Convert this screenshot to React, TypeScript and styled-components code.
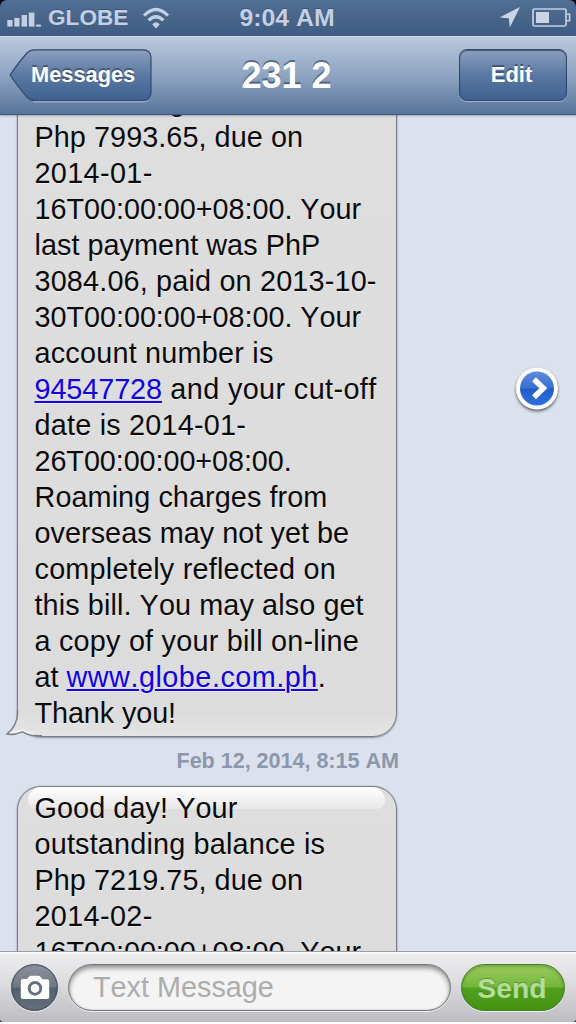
import React from 'react';
import styled, { createGlobalStyle } from 'styled-components';

const GlobalStyle = createGlobalStyle`
  * { box-sizing: border-box; }
  body {
    margin: 0;
    background: #fff;
    font-family: "Liberation Sans", Arial, sans-serif;
    font-kerning: none;
  }
`;

const Phone = styled.div`
  width: 576px;
  height: 1024px;
  display: flex;
  flex-direction: column;
  overflow: hidden;
  background: #fff;
`;

const Frame = styled.div`
  background: #060b14;
`;

const Screen = styled.div`
  height: 1022px;
  display: flex;
  flex-direction: column;
  overflow: hidden;
  border-radius: 7px 7px 3px 3px;
`;

const StatusBar = styled.div`
  flex: 0 0 36px;
  display: grid;
  grid-template-columns: 1fr auto 1fr;
  align-items: center;
  padding: 0 5px 0 7px;
  background: linear-gradient(#526f96, #486488 50%, #3f5c84);
  color: #c3d0e3;
  font-weight: bold;
  text-shadow: 0 -1px 0 rgba(20, 40, 70, 0.35);
`;

const StatusGroup = styled.div<{ $end?: boolean }>`
  display: flex;
  align-items: center;
  justify-content: ${(p) => (p.$end ? 'flex-end' : 'flex-start')};
`;

const Carrier = styled.span`
  font-size: 22.6px;
  line-height: 36px;
  margin: 0 14px 0 6px;
`;

const Clock = styled.span`
  font-size: 24.8px;
  line-height: 36px;
  padding-right: 4px;
`;

const NavBar = styled.div`
  position: relative;
  z-index: 1;
  flex: 0 0 79px;
  display: grid;
  grid-template-columns: 1fr auto 1fr;
  align-items: center;
  padding: 0 9px;
  background: linear-gradient(#b9c8dc, #8ea4c2 50%, #587499);
  border-top: 1px solid #d3deeb;
  border-bottom: 1px solid #3d5779;
  box-shadow: 0 1px 2px rgba(60, 80, 110, 0.4);
  color: #fff;
  font-weight: bold;
  text-shadow: 0 -2px 0 rgba(40, 60, 90, 0.6);
`;

const BackButton = styled.div`
  position: relative;
  width: 143px;
  height: 54px;
  padding-left: 22px;
  font-size: 21.8px;
  line-height: 52px;
`;

const BackShape = styled.svg`
  position: absolute;
  left: 0;
  top: 0;
`;

const Label = styled.span`
  position: relative;
`;

const Title = styled.div`
  font-size: 36px;
  line-height: 76px;
  padding-right: 3px;
`;

const EditButton = styled.div`
  justify-self: end;
  width: 108px;
  height: 52px;
  margin-bottom: 2px;
  border: 1px solid #2f486d;
  border-radius: 8px;
  background: linear-gradient(#8c9fbd, #5a78a3 50%, #40618f);
  box-shadow: inset 0 1px 1px rgba(20, 35, 65, 0.55), 0 1px 0 rgba(180, 200, 225, 0.7);
  text-align: center;
  font-size: 22px;
  line-height: 50px;
  padding-right: 3px;
`;

const Thread = styled.div`
  flex: 1 1 0;
  min-height: 0;
  overflow: hidden;
  background: #dbe2ee;
`;

const Transcript = styled.div`
  margin-top: -72px;
  padding-left: 17px;
  display: flex;
  flex-direction: column;
`;

const MessageRow = styled.div`
  display: flex;
  align-items: center;
  justify-content: space-between;
  padding-right: 16px;
`;

const Bubble = styled.div`
  position: relative;
  width: 380px;
  padding: 3px 0 5px 16.5px;
  border: 1px solid #7b7e83;
  border-radius: 24px;
  background: linear-gradient(#dedede, #dcdcdc calc(100% - 24px), #e4e4e4);
  box-shadow: 0 0 1px rgba(80, 85, 95, 0.6), 0 1px 2px rgba(70, 80, 100, 0.5);
`;

const Gloss = styled.div`
  position: absolute;
  left: 10px;
  right: 11px;
  top: 0;
  height: 22px;
  border-radius: 14px 14px 9px 9px;
  background: linear-gradient(#fff, rgba(255, 255, 255, 0.3));
`;

const Tail = styled.svg`
  position: absolute;
  left: -14px;
  bottom: -4px;
`;

const Line = styled.div<{ $tracking: number }>`
  position: relative;
  height: 36px;
  font-size: 28.8px;
  line-height: 36px;
  letter-spacing: ${(p) => p.$tracking}px;
  color: #0a0a0a;
  white-space: pre;
  text-shadow: 0 1px 0 rgba(255, 255, 255, 0.5);
`;

const Link = styled.span<{ $tracking?: number }>`
  color: #1100e0;
  letter-spacing: ${(p) => p.$tracking ?? 0}px;
  text-decoration: underline;
  text-decoration-thickness: 2px;
  text-underline-offset: 2px;
`;

const Timestamp = styled.div`
  height: 49px;
  padding-left: 159.5px;
  font-size: 21.6px;
  font-weight: bold;
  letter-spacing: -0.04px;
  line-height: 47px;
  color: #8c97ab;
  white-space: pre;
`;

const Composer = styled.div`
  flex: 0 0 71px;
  display: flex;
  align-items: center;
  padding: 1px 11px 0;
  border-top: 1px solid #9a9da3;
  background: linear-gradient(#fff 0, #ececee 3px, #dcdcdf 45%, #bcbcc2);
`;

const CameraButton = styled.div`
  width: 47px;
  height: 47px;
  display: flex;
  align-items: center;
  justify-content: center;
  border: 1px solid #414a57;
  border-radius: 50%;
  background: linear-gradient(#8b929d, #6e7784 48%, #55606e 52%, #66707d);
  box-shadow: inset 0 0 1px #414a57, 0 1px 0 #eee;
`;

const Field = styled.div`
  width: 383px;
  height: 47px;
  margin: 0 10px 0 10px;
  padding-left: 24px;
  border: 1px solid #73757a;
  border-radius: 24px;
  background: #f4f4f4;
  box-shadow: inset 0 0 1px #6a6c72, inset 0 3px 5px rgba(0, 0, 0, 0.42), 0 1px 0 #eee;
  color: #adadad;
  font-size: 28.8px;
  line-height: 45px;
`;

const SendButton = styled.div`
  width: 104px;
  height: 47px;
  border: 1px solid #467d25;
  border-radius: 24px;
  background: linear-gradient(#9ccc61, #75b63b 48%, #51a01f 52%, #43930f);
  box-shadow: inset 0 2px 3px rgba(40, 90, 10, 0.35), 0 1px 0 #eee;
  color: #b5dc98;
  font-size: 28.4px;
  font-weight: bold;
  line-height: 46px;
  padding-right: 2px;
  text-align: center;
  text-shadow: 0 -1px 0 rgba(50, 110, 20, 0.45);
`;

const SignalIcon = () => (
  <svg width="35" height="18" viewBox="0 0 35 18" fill="#c3d0e3">
    <rect x="0.3" y="11" width="5.2" height="6.6" />
    <rect x="7.3" y="9" width="5.2" height="8.6" />
    <rect x="14.6" y="6" width="5.4" height="11.6" />
    <rect x="21.8" y="3.6" width="5.6" height="14" />
    <rect x="29" y="15.6" width="5" height="2" />
  </svg>
);

const WifiIcon = () => (
  <svg width="30" height="22" viewBox="0 0 30 22" fill="none" stroke="#c3d0e3">
    <path d="M2 8.6 Q14 -3.4 26 8.6" strokeWidth="3.4" />
    <path d="M6.6 13.4 Q14 6 21.4 13.4" strokeWidth="3.4" />
    <path d="M14 21.6 L10.2 17.6 Q14 13 17.8 17.6 Z" fill="#c3d0e3" stroke="none" />
  </svg>
);

const LocationIcon = () => (
  <svg width="21" height="22" viewBox="0 0 21 22" fill="#c9d5e5">
    <path d="M21 0 L10.8 20.5 L9.8 11.2 L0.6 10.4 Z" />
  </svg>
);

const Battery = styled.svg`
  margin: 0 0 1px 12px;
`;

const BatteryIcon = () => (
  <Battery width="39" height="19" viewBox="0 0 39 19" fill="none">
    <rect x="1" y="1" width="33" height="17" rx="1.5" stroke="#c3d0e3" strokeWidth="1.7" />
    <rect x="4" y="4" width="13" height="11" fill="#c9d5e5" />
    <path d="M34.5 6.2 H37.6 V12.8 H34.5" stroke="#c3d0e3" strokeWidth="1.6" />
  </Battery>
);

const CameraIcon = () => (
  <svg width="30" height="25" viewBox="0 0 30 25">
    <path
      fill="#fff"
      d="M2.5 4 H7 L9.2 1.6 Q9.9 0.8 11 0.8 H18.5 Q19.6 0.8 20.3 1.6 L22.5 4.2 H27.2 Q29.2 4.2 29.2 6.2 V22 Q29.2 24 27.2 24 H2.8 Q0.8 24 0.8 22 V6 Q0.8 4 2.5 4 Z"
    />
    <circle cx="15" cy="13.4" r="5.8" fill="#fff" stroke="#68717e" strokeWidth="3" />
  </svg>
);

const RetryArrow = () => (
  <svg width="50" height="50" viewBox="0 0 50 50">
    <defs>
      <linearGradient id="arrowFill" x1="0" y1="0" x2="0" y2="1">
        <stop offset="0" stopColor="#5e8bdc" />
        <stop offset="0.48" stopColor="#3a70d2" />
        <stop offset="0.52" stopColor="#215bc8" />
        <stop offset="1" stopColor="#2e72de" />
      </linearGradient>
      <filter id="arrowShade" x="-20%" y="-20%" width="140%" height="150%">
        <feDropShadow dx="0" dy="1.8" stdDeviation="1.5" floodColor="#222" floodOpacity="0.75" />
      </filter>
    </defs>
    <circle cx="27" cy="23.5" r="20.8" fill="#fff" filter="url(#arrowShade)" />
    <circle cx="27" cy="23.5" r="17" fill="url(#arrowFill)" />
    <path d="M24 14.3 L33.3 23.3 L24 32.3" fill="none" stroke="#fff" strokeWidth="5.6" />
  </svg>
);

const BubbleTail = () => (
  <Tail width="42" height="30" viewBox="0 0 42 30">
    <defs>
      <linearGradient id="tailFill" x1="0" y1="0" x2="0" y2="1">
        <stop offset="0" stopColor="#dcdcdc" />
        <stop offset="1" stopColor="#e4e4e4" />
      </linearGradient>
    </defs>
    <path
      d="M14 0 V3 C14 13 9 19 3.5 23.8 C8 25 13 24 18.5 21.8 C23 24.5 27 25.5 34 25.5 H37 V0 Z"
      fill="url(#tailFill)"
    />
    <path
      d="M13.5 0 V3 C13.5 13 9 19 3 24 C8 25.2 13 24 18.5 21.8 C23 24.5 27 25.6 34 25.6 H38"
      fill="none"
      stroke="#7b7e83"
      strokeWidth="1.4"
    />
    <path d="M7 22.5 C11 22.5 14 21.5 18.5 19.5 C22 22.2 26 23.6 30 24" fill="none" stroke="#f2f2f2" strokeWidth="1.6" />
  </Tail>
);

type MessageLine = { text: React.ReactNode; tracking?: number };

const firstMessage: MessageLine[] = [
  { text: 'Good day! Your', tracking: 0.08 },
  { text: 'outstanding balance is', tracking: 0.18 },
  { text: 'Php 7993.65, due on', tracking: 0.06 },
  { text: '2014-01-', tracking: 0.35 },
  { text: '16T00:00:00+08:00. Your', tracking: -0.04 },
  { text: 'last payment was PhP', tracking: 0.04 },
  { text: '3084.06, paid on 2013-10-', tracking: 0.17 },
  { text: '30T00:00:00+08:00. Your', tracking: -0.04 },
  { text: 'account number is', tracking: 0.22 },
  { text: <><Link $tracking={-0.08}>94547728</Link> and your cut-off</>, tracking: 0.38 },
  { text: 'date is 2014-01-', tracking: 0.22 },
  { text: '26T00:00:00+08:00.', tracking: -0.08 },
  { text: 'Roaming charges from', tracking: 0.08 },
  { text: 'overseas may not yet be', tracking: 0.04 },
  { text: 'completely reflected on', tracking: 0.23 },
  { text: 'this bill. You may also get', tracking: 0.1 },
  { text: 'a copy of your bill on-line', tracking: 0.22 },
  { text: <>at <Link $tracking={0.5}>www.globe.com.ph</Link>.</> },
  { text: 'Thank you!', tracking: -0.1 },
];

const secondMessage: MessageLine[] = [
  { text: 'Good day! Your', tracking: 0.08 },
  { text: 'outstanding balance is', tracking: 0.18 },
  { text: 'Php 7219.75, due on', tracking: 0.06 },
  { text: '2014-02-', tracking: 0.35 },
  { text: '16T00:00:00+08:00. Your', tracking: -0.04 },
];

const MessageText = ({ lines }: { lines: MessageLine[] }) => (
  <>
    {lines.map((line, i) => (
      <Line key={i} $tracking={line.tracking ?? 0}>
        {line.text}
      </Line>
    ))}
  </>
);

export default function App() {
  return (
    <Phone>
      <GlobalStyle />
      <Frame>
        <Screen>
          <StatusBar>
            <StatusGroup>
              <SignalIcon />
              <Carrier>GLOBE</Carrier>
              <WifiIcon />
            </StatusGroup>
            <Clock>9:04 AM</Clock>
            <StatusGroup $end>
              <LocationIcon />
              <BatteryIcon />
            </StatusGroup>
          </StatusBar>
          <NavBar>
            <BackButton>
              <BackShape width="143" height="54" viewBox="0 0 143 54">
                <defs>
                  <linearGradient id="backFill" x1="0" y1="0" x2="0" y2="1">
                    <stop offset="0" stopColor="#8c9fbd" />
                    <stop offset="0.5" stopColor="#5a78a3" />
                    <stop offset="1" stopColor="#40618f" />
                  </linearGradient>
                </defs>
                <path d="M24 52.8 H135 Q141 52.8 142 46" fill="none" stroke="#a9bbd3" strokeWidth="1" />
                <path
                  d="M1 26 Q10 13 18 4 Q21 0.8 26 0.8 H134 Q142 0.8 142 8.8 V43.5 Q142 51.5 134 51.5 H26 Q21 51.5 18 48 Q10 39 1 26 Z"
                  fill="url(#backFill)"
                  stroke="#2f486d"
                  strokeWidth="1.2"
                />
              </BackShape>
              <Label>Messages</Label>
            </BackButton>
            <Title>231 2</Title>
            <EditButton>Edit</EditButton>
          </NavBar>
          <Thread>
            <Transcript>
              <MessageRow>
                <Bubble>
                  <Gloss />
                  <BubbleTail />
                  <MessageText lines={firstMessage} />
                </Bubble>
                <RetryArrow />
              </MessageRow>
              <Timestamp>Feb 12, 2014, 8:15 AM</Timestamp>
              <MessageRow>
                <Bubble>
                  <Gloss />
                  <MessageText lines={secondMessage} />
                </Bubble>
              </MessageRow>
            </Transcript>
          </Thread>
          <Composer>
            <CameraButton>
              <CameraIcon />
            </CameraButton>
            <Field>Text Message</Field>
            <SendButton>Send</SendButton>
          </Composer>
        </Screen>
      </Frame>
    </Phone>
  );
}
